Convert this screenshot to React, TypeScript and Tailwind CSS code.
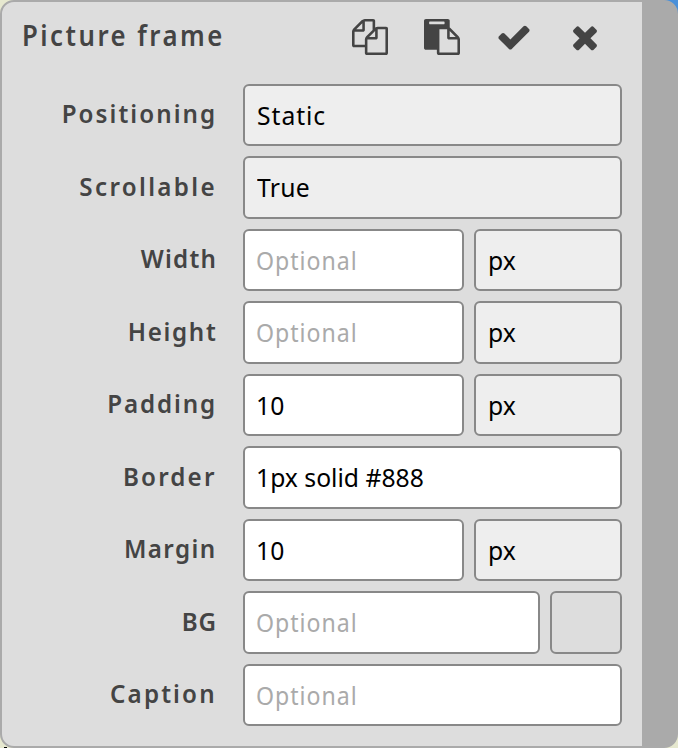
import React from "react";

const icons = {
  copy: "M1696 384q40 0 68 28t28 68v1216q0 40-28 68t-68 28h-960q-40 0-68-28t-28-68v-288h-544q-40 0-68-28t-28-68v-672q0-40 20-88t48-76l408-408q28-28 76-48t88-20h416q40 0 68 28t28 68v328q68-40 128-40h416zm-544 213l-299 299h299v-299zm-640-384l-299 299h299v-299zm196 647l316-316v-416h-384v416q0 40-28 68t-68 28h-416v640h512v-256q0-40 20-88t48-76zm956 804v-1152h-384v416q0 40-28 68t-68 28h-416v640h896z",
  paste: "M768 1664h896v-640h-416q-40 0-68-28t-28-68v-416h-384v1152zm256-1440v-64q0-13-9.5-22.5t-22.5-9.5h-704q-13 0-22.5 9.5t-9.5 22.5v64q0 13 9.5 22.5t22.5 9.5h704q13 0 22.5-9.5t9.5-22.5zm256 672h299l-299-299v299zm512 128v672q0 40-28 68t-68 28h-960q-40 0-68-28t-28-68v-160h-544q-40 0-68-28t-28-68v-1344q0-40 28-68t68-28h1088q40 0 68 28t28 68v328q21 13 36 28l408 408q28 28 48 76t20 88z",
  check: "M1671 566q0 40-28 68l-724 724-136 136q-28 28-68 28t-68-28l-136-136-362-362q-28-28-28-68t28-68l136-136q28-28 68-28t68 28l294 295 656-657q28-28 68-28t68 28l136 136q28 28 28 68z",
  close: "M1490 1322q0 40-28 68l-136 136q-28 28-68 28t-68-28l-294-294-294 294q-28 28-68 28t-68-28l-136-136q-28-28-28-68t28-68l294-294-294-294q-28-28-28-68t28-68l136-136q28-28 68-28t68 28l294 294 294-294q28-28 68-28t68 28l136 136q28 28 28 68t-28 68l-294 294 294 294q28 28 28 68z",
};

function Icon({ name, className = "" }: { name: keyof typeof icons; className?: string }) {
  return (
    <svg viewBox="0 0 1792 1792" className={`size-9 fill-[#444] ${className}`}>
      <path d={icons[name]} />
    </svg>
  );
}

type Kind = "input" | "select" | "swatch";

const surfaces: Record<Kind, string> = {
  input: "bg-white pl-[11px]",
  select: "bg-[#eee] pl-[12px]",
  swatch: "bg-[#ddd]",
};

function Field({ kind, size, value, tracking = "" }: { kind: Kind; size: string; value?: string; tracking?: string }) {
  const optional = kind === "input" && !value;
  return (
    <div className={`flex items-center rounded-[6px] border-2 border-[#888] ${surfaces[kind]} ${size}`}>
      {kind !== "swatch" && (
        <span
          className={`mt-[-1px] origin-left whitespace-nowrap text-[26px] leading-[36px] ${
            optional ? "scale-x-[0.89] tracking-[1.1px] text-[#aaa]" : `scale-x-[0.95] text-black ${tracking}`
          }`}
        >
          {value ?? "Optional"}
        </span>
      )}
    </div>
  );
}

function Row({ label, tracking, tall, children }: { label: string; tracking: string; tall?: boolean; children: React.ReactNode }) {
  return (
    <div className={`flex ${tall ? "h-[63px]" : "h-[62px]"}`}>
      <div className={`flex w-[241px] shrink-0 justify-end pr-[26px] ${tall ? "pt-[12px]" : "pt-[11px]"}`}>
        <span className={`h-9 origin-right scale-x-[0.93] whitespace-nowrap text-[26px] leading-[36px] font-semibold text-[#444] ${tracking}`}>
          {label}
        </span>
      </div>
      <div className="flex gap-[10px]">{children}</div>
    </div>
  );
}

export default function App() {
  return (
    <div className="relative h-[748px] w-[678px] overflow-hidden bg-[linear-gradient(to_bottom_left,#4a90d9_0%,#4a90d9_20%,#e6e8cf_40%)] font-['Noto_Sans',sans-serif]">
      <div className="absolute bottom-0 left-1 h-px w-[3px] bg-black" />
      <div className="h-[748px] rounded-[14px] border-2 border-r-[36px] border-[#aaa] bg-[#ddd]">
        <header className="flex h-[82px] items-start pt-[17px]">
          <h1 className="mt-[-2px] w-[350px] shrink-0 pl-[20px] text-[28px] leading-[36px] font-semibold text-[#444]">
            <span className="inline-block origin-left scale-x-[0.92] whitespace-nowrap tracking-[2.7px]">Picture frame</span>
          </h1>
          <div className="flex gap-9">
            <Icon name="copy" />
            <Icon name="paste" />
            <Icon name="check" />
            <Icon name="close" className="-ml-px" />
          </div>
        </header>
        <main className="flex flex-col gap-[10px]">
          <Row label="Positioning" tracking="tracking-[2.2px]">
            <Field kind="select" size="w-[379px]" value="Static" tracking="tracking-[1px]" />
          </Row>
          <Row label="Scrollable" tracking="tracking-[2.5px]" tall>
            <Field kind="select" size="w-[379px]" value="True" tracking="tracking-[0.3px]" />
          </Row>
          <Row label="Width" tracking="tracking-[1.3px]">
            <Field kind="input" size="w-[221px]" />
            <Field kind="select" size="w-[148px]" value="px" />
          </Row>
          <Row label="Height" tracking="tracking-[1.8px]" tall>
            <Field kind="input" size="w-[221px]" />
            <Field kind="select" size="w-[148px]" value="px" />
          </Row>
          <Row label="Padding" tracking="tracking-[2px]">
            <Field kind="input" size="w-[221px]" value="10" />
            <Field kind="select" size="w-[148px]" value="px" />
          </Row>
          <Row label="Border" tracking="tracking-[2.3px]" tall>
            <Field kind="input" size="w-[379px]" value="1px solid #888" />
          </Row>
          <Row label="Margin" tracking="tracking-[1.5px]">
            <Field kind="input" size="w-[221px]" value="10" />
            <Field kind="select" size="w-[148px]" value="px" />
          </Row>
          <Row label="BG" tracking="tracking-[1px]" tall>
            <Field kind="input" size="w-[297px]" />
            <Field kind="swatch" size="w-[72px]" />
          </Row>
          <Row label="Caption" tracking="tracking-[2.3px]">
            <Field kind="input" size="w-[379px]" />
          </Row>
        </main>
      </div>
    </div>
  );
}
